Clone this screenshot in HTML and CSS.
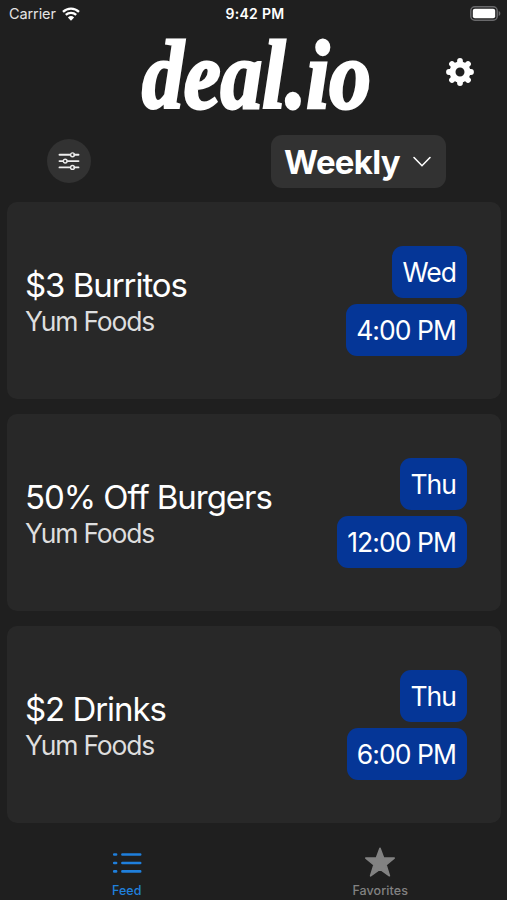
FILE: index.html
```html
<!DOCTYPE html>
<html lang="en">
<head>
<meta charset="utf-8">
<title>deal.io</title>
<meta name="viewport" content="width=device-width, initial-scale=1">
<link rel="stylesheet" href="styles.css">
</head>
<body>
<div class="app">

  <div class="status">
    <div class="carrier">
      <span>Carrier</span>
      <svg class="wifi" width="18" height="14" viewBox="0 0 18 14">
        <path d="M1 4.8a11.6 11.6 0 0 1 16 0M3.8 7.9a7.6 7.6 0 0 1 10.4 0" fill="none" stroke="#fff" stroke-width="2.3"/>
        <path d="M9 13.7 5.9 10.4a4.6 4.6 0 0 1 6.2 0z" fill="#fff"/>
      </svg>
    </div>
    <div class="clock">9:42 PM</div>
    <svg class="battery" width="32" height="15" viewBox="0 0 32 15">
      <rect x="1.8" y=".8" width="26.4" height="13.4" rx="4" fill="none" stroke="#69696b" stroke-width="1.5"/>
      <rect x="3.8" y="2.8" width="22.4" height="9.4" rx="2" fill="#fff"/>
      <path d="M29.7 5c2.2.8 2.2 4.2 0 5z" fill="#69696b"/>
    </svg>
  </div>

  <header class="header">
    <svg class="logo" width="240" height="90" viewBox="0 0 240 90">
      <text x="7" y="81" textLength="229" lengthAdjust="spacingAndGlyphs">deal.io</text>
    </svg>
    <svg class="gear" width="28" height="28" viewBox="-14 -14 28 28">
      <g stroke="#fff" stroke-width="5.8" stroke-linecap="round">
        <path d="M0-11V-8M0 11V8M-11 0H-8M11 0H8M-8-8l2 2M8 8 6 6M-8 8l2-2M8-8 6-6"/>
      </g>
      <circle r="7.5" fill="none" stroke="#fff" stroke-width="6"/>
    </svg>
  </header>

  <div class="filters">
    <div class="filter-button">
      <svg width="22" height="18" viewBox="0 0 22 18" fill="none" stroke="#eee" stroke-linecap="round">
        <path d="M1.5 2.8h10.2M16.3 2.8h4.2M1.5 9.1h3.2M9.3 9.1h11.2M1.5 15.4h10.2M16.3 15.4h4.2" stroke-width="1.9"/>
        <g stroke-width="1.4">
          <circle cx="14.5" cy="2.8" r="1.9"/>
          <circle cx="7.2" cy="9.1" r="1.9"/>
          <circle cx="14.5" cy="15.4" r="1.9"/>
        </g>
      </svg>
    </div>
    <div class="period">
      <span>Weekly</span>
      <svg width="20" height="12" viewBox="0 0 20 12">
        <path d="M2 1.5 10 9.7 18 1.5" fill="none" stroke="#fff" stroke-width="1.6" stroke-linecap="round"/>
      </svg>
    </div>
  </div>

  <main class="feed">
    <div class="card">
      <div class="deal">
        <div class="deal-name">$3 Burritos</div>
        <div class="deal-place">Yum Foods</div>
      </div>
      <div class="when">
        <span class="badge">Wed</span>
        <span class="badge">4:00 PM</span>
      </div>
    </div>
    <div class="card">
      <div class="deal">
        <div class="deal-name">50% Off Burgers</div>
        <div class="deal-place">Yum Foods</div>
      </div>
      <div class="when">
        <span class="badge">Thu</span>
        <span class="badge">12:00 PM</span>
      </div>
    </div>
    <div class="card">
      <div class="deal">
        <div class="deal-name">$2 Drinks</div>
        <div class="deal-place">Yum Foods</div>
      </div>
      <div class="when">
        <span class="badge">Thu</span>
        <span class="badge">6:00 PM</span>
      </div>
    </div>
  </main>

  <nav class="tabs">
    <div class="tab active">
      <svg width="32" height="32" viewBox="0 0 32 32" fill="none" stroke="currentColor" stroke-width="2.6" stroke-linecap="round">
        <path d="M3.2 8.5h1.9M3.2 17h1.9M3.2 25.4h1.9M11.4 8.5h17.8M11.4 17h17.8M11.4 25.4h17.8"/>
      </svg>
      <span>Feed</span>
    </div>
    <div class="tab">
      <svg width="32" height="32" viewBox="0 0 32 32" fill="currentColor" stroke="currentColor" stroke-width="1.6" stroke-linejoin="round">
        <path d="M16 2.2l3.6 9.9h10.6l-8.2 6.7 3.4 11L16 23.2l-9.4 6.6 3.4-11-8.2-6.7h10.6z"/>
      </svg>
      <span>Favorites</span>
    </div>
  </nav>

</div>
</body>
</html>
```

FILE: styles.css
```css
body {
  margin: 0;
  background: #1f1f1f;
  color: #fff;
  font-family: Inter, "Liberation Sans", sans-serif;
}

.app {
  display: flex;
  flex-direction: column;
  box-sizing: border-box;
  width: 507px;
  height: 900px;
  overflow: hidden;
}

svg {
  display: block;
}

/* status bar */

.status {
  display: grid;
  grid-template-columns: 1fr auto 1fr;
  align-items: center;
  height: 27px;
  padding: 0 6px 0 9px;
  font-size: 14.5px;
}

.carrier {
  display: flex;
  align-items: center;
  gap: 6px;
  color: #e4e4e4;
  letter-spacing: -0.1px;
}

.clock {
  font-weight: 600;
  font-size: 14px;
  line-height: 17px;
  letter-spacing: 0.3px;
}

.battery {
  justify-self: end;
}

/* logo and settings */

.header {
  display: flex;
  align-items: center;
  justify-content: space-between;
  height: 90px;
  padding: 0 33px 0 135px;
}

.logo {
  overflow: visible;
}

.logo text {
  fill: #fff;
  stroke: #fff;
  stroke-width: 3px;
  font-family: "Liberation Serif", serif;
  font-size: 98px;
  font-weight: bold;
  font-style: italic;
}

/* filter row */

.filters {
  display: flex;
  align-items: center;
  justify-content: space-between;
  height: 53px;
  padding: 18px 61px 14px 47px;
}

.filter-button {
  display: flex;
  align-items: center;
  justify-content: center;
  width: 44px;
  height: 44px;
  margin-bottom: 1px;
  border-radius: 50%;
  background: #323232;
}

.period {
  display: flex;
  align-items: center;
  justify-content: space-between;
  box-sizing: border-box;
  width: 175px;
  height: 53px;
  padding: 0 14px 0 13px;
  border-radius: 11px;
  background: #323232;
  font-size: 33px;
  font-weight: 700;
  letter-spacing: -0.7px;
}

/* deals */

.feed {
  display: flex;
  flex-direction: column;
  gap: 15px;
  padding: 0 6px 0 7px;
}

.card {
  display: flex;
  align-items: center;
  justify-content: space-between;
  box-sizing: border-box;
  height: 197px;
  padding: 0 34px 0 18px;
  border-radius: 10px;
  background: #282828;
}

.deal {
  padding-top: 1px;
}

.deal-name {
  font-size: 33px;
  line-height: 40px;
  letter-spacing: -1.05px;
}

.deal-place {
  color: #dedede;
  font-size: 26.5px;
  line-height: 33px;
  letter-spacing: -1.2px;
}

.when {
  display: flex;
  flex-direction: column;
  align-items: flex-end;
  gap: 6px;
}

.badge {
  height: 52px;
  padding: 0 11px 0 10px;
  border-radius: 11px;
  background: #053697;
  font-size: 26.5px;
  line-height: 52px;
  letter-spacing: -0.95px;
}

/* bottom tabs */

.tabs {
  display: flex;
  padding-top: 23px;
}

.tab {
  display: flex;
  flex: 1;
  flex-direction: column;
  align-items: center;
  color: #828282;
  font-size: 12.5px;
  font-weight: 500;
  line-height: 16px;
  letter-spacing: 0.1px;
}

.tab span {
  margin-top: 5px;
}

.active {
  color: #1f7fdc;
}
```
